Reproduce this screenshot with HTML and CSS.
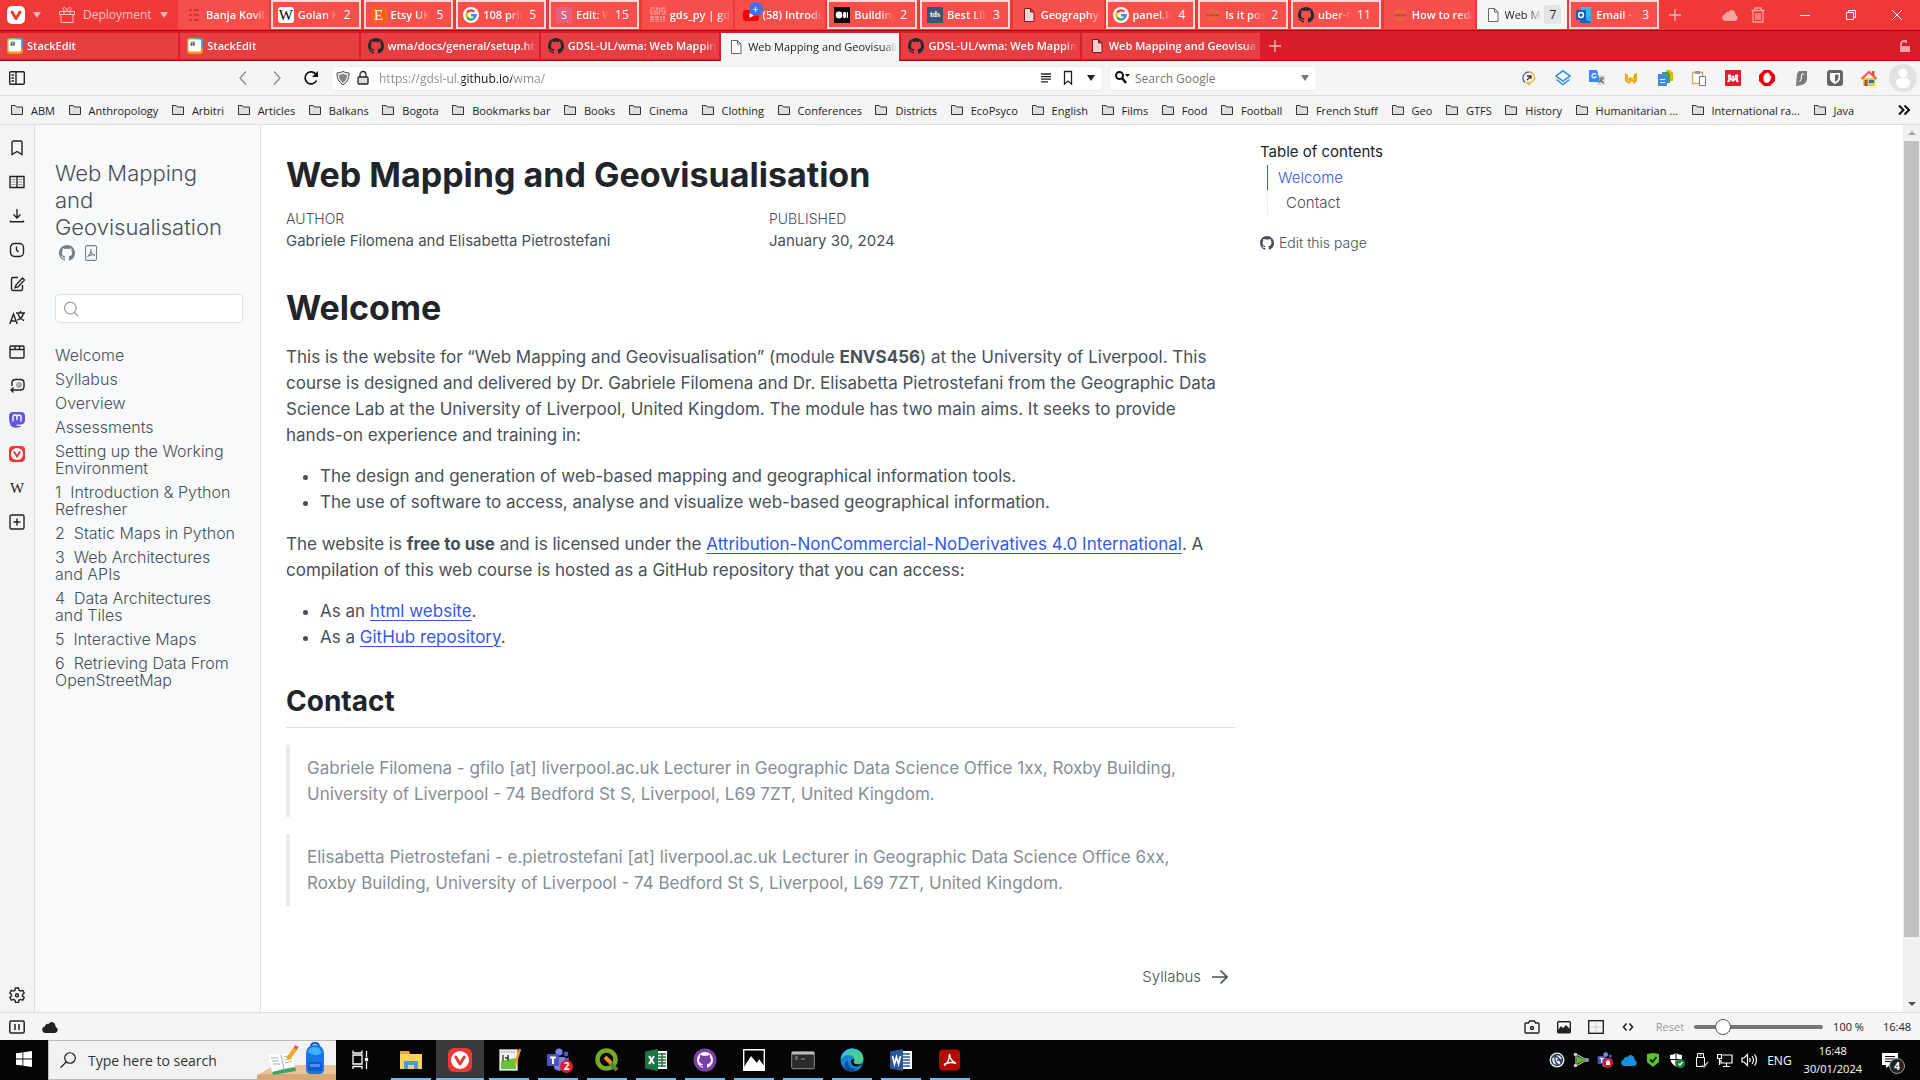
FILE: index.html
```html
<!DOCTYPE html>
<html lang="en">
<head>
    <meta charset="UTF-8">
    <meta name="viewport" content="width=device-width, initial-scale=1.0">
    <title>Web Mapping and Geovisualisation</title>
    <link rel="stylesheet" href="styles.css">
</head>
<body>

    <!-- shared icons -->
    <svg class="defs" aria-hidden="true">
        <symbol id="github" viewBox="0 0 16 16"><path fill="currentColor" d="M8 0C3.58 0 0 3.58 0 8c0 3.54 2.29 6.53 5.47 7.59.4.07.55-.17.55-.38 0-.19-.01-.82-.01-1.49-2.01.37-2.53-.49-2.69-.94-.09-.23-.48-.94-.82-1.13-.28-.15-.68-.52-.01-.53.63-.01 1.08.58 1.23.82.72 1.21 1.87.87 2.33.66.07-.52.28-.87.51-1.07-1.78-.2-3.64-.89-3.64-3.95 0-.87.31-1.59.82-2.15-.08-.2-.36-1.02.08-2.12 0 0 .67-.21 2.2.82.64-.18 1.32-.27 2-.27.68 0 1.36.09 2 .27 1.53-1.04 2.2-.82 2.2-.82.44 1.1.16 1.92.08 2.12.51.56.82 1.27.82 2.15 0 3.07-1.87 3.75-3.65 3.95.29.25.54.73.54 1.48 0 1.07-.01 1.93-.01 2.2 0 .21.15.46.55.38A8.01 8.01 0 0 0 16 8c0-4.42-3.58-8-8-8z"/></symbol>
        <symbol id="google" viewBox="0 0 16 16"><circle cx="8" cy="8" r="8" fill="#fff"/><g fill="none" stroke-width="2.4"><path stroke="#ea4335" d="M4.1 5.6A4.6 4.6 0 0 1 11.3 4.8"/><path stroke="#fbbc05" d="M4.1 10.4a4.8 4.8 0 0 1 0-4.8"/><path stroke="#34a853" d="M4.1 10.4a4.6 4.6 0 0 0 6.9 1"/><path stroke="#4285f4" d="M8 8.2h4.6a4.6 4.6 0 0 1-1.6 3.2"/></g></symbol>
        <symbol id="page" viewBox="0 0 16 16"><path fill="#fff" fill-opacity=".75" stroke="currentColor" d="M3.5 1.5h6l3.500 3.500v9.500h-9.500zM9.500 1.500v3.500h3.500"/></symbol>
        <symbol id="stackedit" viewBox="0 0 16 16"><rect width="16" height="16" rx="3" fill="#f7941d"/><path fill="#8bc540" d="M0 3v10l8-5V0H3a3 3 0 0 0-3 3z"/><path fill="#39a7e0" d="M8 0h5a3 3 0 0 1 3 3v8L8 8z"/><rect x="1.500" y="1.500" width="12.500" height="12" rx="1.500" fill="#fff"/><path stroke="#555" stroke-width=".9" d="M5 3.500 4.300 8M7.300 3.500 6.600 8M3.500 5h4.700M3.300 6.700H8"/></symbol>
        <symbol id="jupyter" viewBox="0 0 16 16"><path fill="none" stroke="#d9762b" stroke-width="2" d="M2.500 6Q8 1 13.500 6M2.500 10.500Q8 15 13.500 10.500"/><path stroke="#8a5040" stroke-width="1.500" stroke-dasharray="1.500 .7" d="M2 8.200h12"/></symbol>
        <symbol id="folder" viewBox="0 0 12 12"><path fill="#dedede" stroke="#333" d="M.5 10.500v-9h3.700l1.300 1.500h6v7.500z"/></symbol>
        <symbol id="vivaldi" viewBox="0 0 16 16"><rect width="16" height="16" rx="4" fill="#ef3939"/><circle cx="8" cy="8" r="6" fill="#fff"/><path fill="none" stroke="#ef3939" stroke-width="2" stroke-linecap="round" stroke-linejoin="round" d="M5.200 6 8 10.600 10.800 6"/></symbol>
        <symbol id="cloud" viewBox="0 0 16 16"><path fill="currentColor" d="M3.500 14a3.300 3.300 0 0 1-.8-6.500A3 3 0 0 1 6.500 5a3.700 3.700 0 0 1 6.900 1.500c.3 1 .3 1.300.7 1.700A3.100 3.100 0 0 1 12.800 14z"/></symbol>
        <symbol id="teams" viewBox="0 0 24 24"><circle cx="13" cy="4" r="3.600" fill="#7b83eb"/><circle cx="20" cy="6" r="2.400" fill="#5059c9"/><path fill="#5059c9" d="M17 10h6v6a4 4 0 0 1-6 3z"/><path fill="#7b83eb" d="M8 9h11v8a6 6 0 0 1-11 3z"/><rect x="1" y="6" width="12" height="12" rx="1" fill="#4b53bc"/><path stroke="#fff" stroke-width="2" d="M4 9.500h6M7 9.500V16"/></symbol>
        <symbol id="plus" viewBox="0 0 12 12"><path stroke="currentColor" stroke-width="1.400" d="M6 0v12M0 6h12"/></symbol>
    </svg>

    <header class="browser">
        <!-- top level tabs -->
        <div class="tabbar tabbar-main">
            <div class="workspace">
                <svg class="logo" viewBox="0 0 18 18"><rect width="18" height="18" rx="5" fill="#fff"/><path fill="none" stroke="#ef3939" stroke-width="3" stroke-linecap="round" stroke-linejoin="round" d="M5 6l4 6.500L13 6"/></svg>
                <i class="caret"></i>
                <svg class="gift" viewBox="0 0 16 16" fill="none" stroke="currentColor"><path d="M.5 4.500h15v3H.5zM2 7.500v8h12v-8M5 4.500v3M11 4.500v3M8 4.500C6 5 3.500 3.500 4 1.500S7.500.5 8 4.500C8.500.5 11.500-.5 12 1.500S10 5 8 4.500"/></svg>
                <span>Deployment</span>
                <i class="caret"></i>
            </div>
            <nav class="tabs">
                <button class="tab"><svg class="dim" viewBox="0 0 16 16"><path stroke="#b02a30" stroke-width="2" d="M3 3h3M8 3h5M3 8h3M8 8h5M3 13h3M8 13h5"/></svg><span>Banja Koviljača</span></button>
                <button class="tab stack"><i class="fav wiki">W</i><span>Golan Heights</span><b>2</b></button>
                <button class="tab stack"><i class="fav etsy">E</i><span>Etsy UK</span><b>5</b></button>
                <button class="tab stack"><svg><use href="#google"/></svg><span>108 prints</span><b>5</b></button>
                <button class="tab stack"><i class="fav sedit">S</i><span>Edit: Web</span><b>15</b></button>
                <button class="tab"><svg class="dim" viewBox="0 0 16 16"><g fill="none" stroke="#fff" stroke-width="1.200" stroke-dasharray="2 .6"><path d="M5 1H1v6h4V4H3M7 1v6h2l1-2V3L9 1zM15 1h-3v3h3v3h-3M1 9v6M3 9v6M6 9v6M8 9v6M11 9v6M14 9v6"/></g></svg><span>gds_py | gds</span></button>
                <button class="tab"><svg viewBox="0 0 16 16"><rect y="3" width="16" height="11" rx="3" fill="#f00000"/><path fill="#fff" d="M6.500 6v5L11 8.500z"/></svg><em>+</em><span>(58) Introduction</span></button>
                <button class="tab stack"><svg viewBox="0 0 16 16"><rect width="16" height="16" fill="#000"/><circle cx="5" cy="8" r="3.400" fill="#fff"/><ellipse cx="10.700" cy="8" rx="1.700" ry="3.200" fill="#fff"/><rect x="13" y="5" width="1" height="6" fill="#fff"/></svg><span>Building</span><b>2</b></button>
                <button class="tab stack"><i class="fav tds">tds</i><span>Best Lib</span><b>3</b></button>
                <button class="tab"><svg class="pink"><use href="#page"/></svg><span>Geography</span></button>
                <button class="tab stack"><svg><use href="#google"/></svg><span>panel.layout</span><b>4</b></button>
                <button class="tab stack"><svg><use href="#jupyter"/></svg><span>Is it possible</span><b>2</b></button>
                <button class="tab stack"><svg class="ink"><use href="#github"/></svg><span>uber-tools</span><b>11</b></button>
                <button class="tab"><svg><use href="#jupyter"/></svg><span>How to reduce</span></button>
                <button class="tab active"><svg class="grey"><use href="#page"/></svg><span>Web Mapping</span><b>7</b></button>
                <button class="tab stack"><svg viewBox="0 0 16 16"><path fill="#35b8f1" d="M5 0h10v14H5z"/><path fill="#1565c0" d="M4 9l12 7H4z"/><path fill="#28a8ea" d="M16 8v8L9 12z"/><rect y="3" width="10" height="10" rx="1" fill="#0a5fb8"/><circle cx="5" cy="8" r="2.400" fill="none" stroke="#fff" stroke-width="1.500"/></svg><span>Email - Pietro</span><b>3</b></button>
            </nav>
            <button class="newtab" aria-label="New tab"><svg><use href="#plus"/></svg></button>
            <div class="window-buttons">
                <svg class="soft" viewBox="0 0 16 16"><use href="#cloud"/></svg>
                <svg class="soft" viewBox="0 0 16 16" fill="none" stroke="currentColor" stroke-width="1.300"><path d="M1.500 3.500h13M5 3V1h6v2M3 4v11h10V4M6 6v7M8 6v7M10 6v7"/></svg>
                <button aria-label="Minimise"><svg viewBox="0 0 10 10"><path stroke="#fff" d="M0 5.500h10"/></svg></button>
                <button aria-label="Restore"><svg viewBox="0 0 10 10"><path fill="none" stroke="#fff" d="M.5 2.500h7v7h-7zM2.500 2.500v-2h7v7h-2"/></svg></button>
                <button aria-label="Close"><svg viewBox="0 0 10 10"><path stroke="#fff" d="M0 0l10 10M10 0L0 10"/></svg></button>
            </div>
        </div>

        <!-- tabs inside the open stack -->
        <div class="tabbar tabbar-sub">
            <nav class="tabs">
                <button class="tab"><svg><use href="#stackedit"/></svg><span>StackEdit</span></button>
                <button class="tab"><svg><use href="#stackedit"/></svg><span>StackEdit</span></button>
                <button class="tab"><svg class="ink"><use href="#github"/></svg><span>wma/docs/general/setup.html</span></button>
                <button class="tab"><svg class="ink"><use href="#github"/></svg><span>GDSL-UL/wma: Web Mapping</span></button>
                <button class="tab active"><svg class="grey"><use href="#page"/></svg><span>Web Mapping and Geovisualisation</span></button>
                <button class="tab"><svg class="ink"><use href="#github"/></svg><span>GDSL-UL/wma: Web Mapping</span></button>
                <button class="tab"><svg class="pink"><use href="#page"/></svg><span>Web Mapping and Geovisualisation</span></button>
            </nav>
            <button class="newtab" aria-label="New tab"><svg><use href="#plus"/></svg></button>
            <svg class="unlock" viewBox="0 0 12 12"><path fill="currentColor" d="M1 6h10v6H1z"/><path fill="none" stroke="currentColor" stroke-width="1.800" d="M2 6.500V3.500Q2.500 1 5.500 1H7v2"/></svg>
        </div>

        <div class="toolbar">
            <div class="toolbar-nav">
                <svg viewBox="0 0 16 16" fill="none" stroke="#222" stroke-width="1.400"><rect x=".7" y="1.700" width="14.600" height="12.600" rx="1"/><path d="M7 2v12M2.500 5H5M2.500 8H5M2.500 11H5"/></svg>
                <div class="arrows">
                    <svg viewBox="0 0 16 16" fill="none" stroke="#888" stroke-width="1.300"><path d="M11 1.500 5 8l6 6.500"/></svg>
                    <svg viewBox="0 0 16 16" fill="none" stroke="#888" stroke-width="1.300"><path d="M5 1.500 11 8l-6 6.500"/></svg>
                    <svg viewBox="0 0 16 16"><path fill="none" stroke="#111" stroke-width="1.700" d="M13.500 10.500a6 6 0 1 1-.5-6"/><path fill="#111" d="M15 1v6H9z"/></svg>
                </div>
            </div>
            <div class="field address">
                <svg viewBox="0 0 16 16"><path fill="#fff" stroke="#444" d="M8 1.500Q11 3 14 3q.5 8-6 11.800Q1.500 11 2 3q3 0 6-1.500z"/><path fill="#888" d="M8 3.500Q10.500 4.700 12.300 4.700q0 5-4.300 8.300-4.300-3.300-4.300-8.300 1.800 0 4.300-1.200z"/></svg>
                <svg viewBox="0 0 16 16"><path fill="none" stroke="#222" stroke-width="1.300" d="M5 7V4.500a3 3 0 0 1 6 0V7"/><rect x="3" y="7" width="10" height="7" rx="1" fill="#ddd" stroke="#222" stroke-width="1.300"/></svg>
                <input type="text" aria-label="Address" value="https://gdsl-ul.github.io/wma/">
                <svg viewBox="0 0 16 16"><path stroke="#222" stroke-width="1.300" d="M3 4h10M3 6.600h10M3 9.200h10M3 11.800h7"/></svg>
                <svg viewBox="0 0 16 16"><path fill="none" stroke="#222" stroke-width="1.300" d="M4.500 1.500h7v12.500L8 11l-3.500 3z"/></svg>
                <i class="caret dark"></i>
            </div>
            <div class="field search">
                <svg viewBox="0 0 16 16"><circle cx="5.500" cy="5.500" r="3.500" fill="none" stroke="#111" stroke-width="2"/><path stroke="#111" stroke-width="2.500" d="M8 8l4 5"/><path fill="#111" d="M11 4h5l-2.500 3z"/></svg>
                <input type="text" aria-label="Search" placeholder="Search Google">
                <i class="caret mid"></i>
            </div>
            <div class="extensions">
                <svg viewBox="0 0 16 16" fill="none" stroke-width="1.300"><path stroke="#3c64b1" d="M4 12.500A6 6 0 0 1 8 2"/><path stroke="#f5a623" d="M8 2a5.500 5.500 0 0 1 0 11H6l3 2"/><path stroke="#333" d="M6 10l4-4M6 6h4v3"/></svg>
                <svg viewBox="0 0 16 16" fill="none" stroke="#2a8ae0" stroke-width="1.500"><path d="M8 .8 15 6l-7 5-7-5zM1.500 9.500 8 14.500l6.500-5"/></svg>
                <svg viewBox="0 0 16 16"><path fill="#ddd" d="M6 5h10v10H8z"/><path fill="#4285f4" d="M0 0h8l3 12H0z"/><path fill="none" stroke="#fff" stroke-width="1.200" d="M7 4.500A2.200 2.200 0 1 0 7 7H5.300"/><path stroke="#667" d="M10 8h5M12.500 7v1M14 8q-1 3-4 5M11 9q1 3 4 4"/></svg>
                <svg viewBox="0 0 16 16"><path fill="#f2a91e" d="M2 3l3 2v4l2-2 3 1 1-4 3-1v8l-3 3-2-3-3 3-4-3z"/><path stroke="#fde3a8" d="M5 10l2 2M9 8l2 2"/></svg>
                <svg viewBox="0 0 16 16"><path fill="#f9ab00" d="M9 0h4l3 3v8H9z"/><path fill="#34a853" d="M5 2h6l2 2v9H5z"/><path fill="#4285f4" d="M1 4h6l3 3v9H1z"/><path stroke="#fff" d="M3 9.500h5M3 12.500h5"/></svg>
                <svg viewBox="0 0 16 16"><path fill="#fff" stroke="#dba75c" stroke-width="1.300" d="M1.500 2.500h10v11h-10z"/><path fill="#999" d="M4 1h5v3H4z"/><path fill="#fff" stroke="#777" d="M8.500 6.500h6v9h-6z"/></svg>
                <svg viewBox="0 0 16 16"><rect width="16" height="16" fill="#e01f2d"/><path fill="#fff" d="M2 11.500Q4 10 3 7.500h3L8 9l2-1.500h3Q12 10 14 11.500q-1.500 1-3 0L10.500 9.500 9 11.500H7L5.500 9.500 5 11.500q-1.500 1-3 0z"/><circle cx="4.500" cy="6" r="1.800" fill="#fff"/><circle cx="11.500" cy="6" r="1.800" fill="#fff"/><circle cx="8" cy="7" r="1.500" fill="#fff"/></svg>
                <svg viewBox="0 0 16 16"><path fill="#e8000d" d="M5 0h6l5 5v6l-5 5H5l-5-5V5z"/><path fill="#fff" d="M4.500 5.500h1V3.800h1.300V3h1.300v-.5h1.200v1h1.300v3l1-.8.9.7-1.500 4.300Q10 13 8 13q-3 0-3.500-3z"/></svg>
                <svg viewBox="0 0 16 16"><path fill="#7a7a7a" d="M6 1h8v8q0 6-11 7l1-12z"/><path fill="none" stroke="#fff" d="M11 4Q8 3 8.500 6T6.500 12"/></svg>
                <svg viewBox="0 0 16 16"><rect width="16" height="16" rx="3" fill="#666"/><path fill="#fff" d="M3 3h10v5q0 3.500-5 6-5-2.500-5-6z"/><path fill="#666" d="M8 4.500h3.500V8q0 2-3.500 4.200z"/></svg>
                <svg viewBox="0 0 16 16"><path fill="#f6c343" d="M2 8h12v8H2z"/><path fill="#c8553d" d="M11 1h2.500v5H11z"/><path fill="none" stroke="#ee5a4f" stroke-width="2.300" d="M.5 9 8 2l7.500 7"/><path fill="#2878b8" d="M8 10h5v3H8z"/><path fill="#9a5a2a" d="M3.500 10h3v6h-3z"/></svg>
                <svg class="avatar" viewBox="0 0 28 28"><circle cx="14" cy="14" r="14" fill="#e2e2e2"/><circle cx="14" cy="9" r="4.500" fill="#fff"/><rect x="7" y="14" width="14" height="10" rx="5" fill="#fff"/></svg>
            </div>
        </div>

        <nav class="bookmarks">
            <a href="#"><svg><use href="#folder"/></svg>ABM</a>
            <a href="#"><svg><use href="#folder"/></svg>Anthropology</a>
            <a href="#"><svg><use href="#folder"/></svg>Arbitri</a>
            <a href="#"><svg><use href="#folder"/></svg>Articles</a>
            <a href="#"><svg><use href="#folder"/></svg>Balkans</a>
            <a href="#"><svg><use href="#folder"/></svg>Bogota</a>
            <a href="#"><svg><use href="#folder"/></svg>Bookmarks bar</a>
            <a href="#"><svg><use href="#folder"/></svg>Books</a>
            <a href="#"><svg><use href="#folder"/></svg>Cinema</a>
            <a href="#"><svg><use href="#folder"/></svg>Clothing</a>
            <a href="#"><svg><use href="#folder"/></svg>Conferences</a>
            <a href="#"><svg><use href="#folder"/></svg>Districts</a>
            <a href="#"><svg><use href="#folder"/></svg>EcoPsyco</a>
            <a href="#"><svg><use href="#folder"/></svg>English</a>
            <a href="#"><svg><use href="#folder"/></svg>Films</a>
            <a href="#"><svg><use href="#folder"/></svg>Food</a>
            <a href="#"><svg><use href="#folder"/></svg>Football</a>
            <a href="#"><svg><use href="#folder"/></svg>French Stuff</a>
            <a href="#"><svg><use href="#folder"/></svg>Geo</a>
            <a href="#"><svg><use href="#folder"/></svg>GTFS</a>
            <a href="#"><svg><use href="#folder"/></svg>History</a>
            <a href="#"><svg><use href="#folder"/></svg>Humanitarian ...</a>
            <a href="#"><svg><use href="#folder"/></svg>International ra...</a>
            <a href="#"><svg><use href="#folder"/></svg>Java</a>
            <button class="more" aria-label="More bookmarks"><svg viewBox="0 0 12 12"><path fill="none" stroke="#111" stroke-width="2" d="M1 1.500 5.500 6 1 10.500M6.500 1.500 11 6l-4.500 4.500"/></svg></button>
        </nav>
    </header>

    <div class="viewport">
        <aside class="panel">
            <svg viewBox="0 0 16 16"><path d="M3 14.500v-12q0-1.500 1.500-1.500h7Q13 1 13 2.500v12L8 11.500z"/></svg>
            <svg viewBox="0 0 16 16"><path d="M1 2.500h14v11H1zM8 2.500V14"/><path class="thin" d="M2.500 5.500h4M2.500 8h4M2.500 10.500h4M9.500 5.500h4M9.500 8h4M9.500 10.500h4"/></svg>
            <svg viewBox="0 0 16 16"><path d="M8 1v8.500M4.500 6.500 8 10l3.500-3.500M1.500 12.500v1.300h13v-1.300"/></svg>
            <svg viewBox="0 0 16 16"><rect x="1.500" y="1.500" width="13" height="13" rx="4"/><path d="M7.500 4.500V8l2 2"/></svg>
            <svg viewBox="0 0 16 16"><path d="M9 1.500H4q-1.500 0-1.500 1.500v10q0 1.500 1.500 1.500h8q1.500 0 1.500-1.500V9M13.500 2l2 2L9 11l-3 .8L7 9z"/></svg>
            <svg viewBox="0 0 16 16"><path d="M.8 14 4.500 4l3.700 10M2 11h5M7 3h9M11.500 1v2M14.500 3q-1 5-6 7M9 4q2 5 6 6.500"/></svg>
            <svg viewBox="0 0 16 16"><rect x="1" y="2" width="14" height="12" rx="1"/><path d="M1 5.500h14M6 2v3.500M10.500 2v3.500"/></svg>
            <svg viewBox="0 0 16 16"><path d="M3 8V5q0-3.500 3.500-3.500h5Q15 1.500 15 5v3.500q0 3.500-3.500 3.500H2M4.500 9.500 2 12l2.500 2.500"/><circle cx="10" cy="7" r="3" fill="#aaa" stroke="none"/></svg>
            <svg viewBox="0 0 16 16"><path fill="#6156e0" stroke="none" d="M4 0h8q4 0 4 4v4q0 4-4 4.500l-5 .2q1 1.800 4.500 1v1.300Q3 17.500 1 12 0 9 0 4q0-4 4-4z"/><path stroke="#fff" d="M4 9.500V5q0-2 2-2t2 2v3-3q0-2 2-2t2 2v4.500"/></svg>
            <svg class="filled"><use href="#vivaldi"/></svg>
            <span class="panel-w">W</span>
            <svg viewBox="0 0 16 16"><rect x="1" y="1" width="14" height="14" rx="1.500"/><path d="M8 4.500v7M4.500 8h7"/></svg>
            <svg class="settings" viewBox="0 0 16 16"><path d="M6.500 1h3l.5 2.200 1.500.9 2.200-.7 1.500 2.600L13.500 7.500v1.500l1.700 1.500-1.500 2.600-2.200-.7-1.500.9L9.500 15.500h-3L6 13.300l-1.500-.9-2.200.7L.8 10.500 2.500 9V7.500L.8 6l1.500-2.600 2.200.7L6 3.200z"/><circle cx="8" cy="8.200" r="1.500"/></svg>
        </aside>

        <div class="page">
            <nav class="book-nav">
                <div class="book-title">Web Mapping and Geovisualisation</div>
                <div class="book-tools">
                    <a href="#" aria-label="Source code"><svg><use href="#github"/></svg></a>
                    <a href="#" aria-label="Download PDF"><svg viewBox="0 0 16 16" fill="none" stroke="currentColor" stroke-width="1.100"><rect x="2.500" y=".6" width="11" height="14.800" rx="1.500"/><path d="M4.500 12Q8 9 8 4M7.700 4.500Q8 9 12 10.500M4.500 11.500Q8 9 12 9.800"/></svg></a>
                </div>
                <label class="book-search">
                    <svg viewBox="0 0 16 16" fill="none" stroke="#a0a0a0" stroke-width="1.300"><circle cx="7.300" cy="7" r="5.800"/><path d="M11.300 11.300 15 15"/></svg>
                    <input type="text" aria-label="Search this book">
                </label>
                <ul>
                    <li><a href="#">Welcome</a></li>
                    <li><a href="#">Syllabus</a></li>
                    <li><a href="#">Overview</a></li>
                    <li><a href="#">Assessments</a></li>
                    <li><a href="#">Setting up the Working Environment</a></li>
                    <li><a href="#">1&nbsp; Introduction &amp; Python Refresher</a></li>
                    <li><a href="#">2&nbsp; Static Maps in Python</a></li>
                    <li><a href="#">3&nbsp; Web Architectures and APIs</a></li>
                    <li><a href="#">4&nbsp; Data Architectures and Tiles</a></li>
                    <li><a href="#">5&nbsp; Interactive Maps</a></li>
                    <li><a href="#">6&nbsp; Retrieving Data From OpenStreetMap</a></li>
                </ul>
            </nav>

            <main>
                <h1>Web Mapping and Geovisualisation</h1>
                <div class="meta">
                    <div>
                        <div class="meta-heading">AUTHOR</div>
                        <div>Gabriele Filomena and Elisabetta Pietrostefani</div>
                    </div>
                    <div>
                        <div class="meta-heading">PUBLISHED</div>
                        <div>January 30, 2024</div>
                    </div>
                </div>

                <h1>Welcome</h1>
                <p>This is the website for “Web Mapping and Geovisualisation” (module <strong>ENVS456</strong>) at the University of Liverpool. This course is designed and delivered by Dr. Gabriele Filomena and Dr. Elisabetta Pietrostefani from the Geographic Data Science Lab at the University of Liverpool, United Kingdom. The module has two main aims. It seeks to provide hands-on experience and training in:</p>
                <ul>
                    <li>The design and generation of web-based mapping and geographical information tools.</li>
                    <li>The use of software to access, analyse and visualize web-based geographical information.</li>
                </ul>
                <p>The website is <strong>free to use</strong> and is licensed under the <a href="#">Attribution-NonCommercial-NoDerivatives 4.0 International</a>. A compilation of this web course is hosted as a GitHub repository that you can access:</p>
                <ul>
                    <li>As an <a href="#">html website</a>.</li>
                    <li>As a <a href="#">GitHub repository</a>.</li>
                </ul>

                <h2>Contact</h2>
                <blockquote>Gabriele Filomena - gfilo [at] liverpool.ac.uk Lecturer in Geographic Data Science Office 1xx, Roxby Building, University of Liverpool - 74 Bedford St S, Liverpool, L69 7ZT, United Kingdom.</blockquote>
                <blockquote>Elisabetta Pietrostefani - e.pietrostefani [at] liverpool.ac.uk Lecturer in Geographic Data Science Office 6xx, Roxby Building, University of Liverpool - 74 Bedford St S, Liverpool, L69 7ZT, United Kingdom.</blockquote>

                <a class="next" href="#">Syllabus <svg viewBox="0 0 16 16" fill="none" stroke="currentColor" stroke-width="1.700"><path d="M0 8h15M8.500 1.500 15 8l-6.500 6.500"/></svg></a>
            </main>

            <aside class="toc">
                <h2>Table of contents</h2>
                <ul>
                    <li class="current"><a href="#">Welcome</a></li>
                    <li class="sub"><a href="#">Contact</a></li>
                </ul>
                <a class="edit" href="#"><svg><use href="#github"/></svg>Edit this page</a>
            </aside>
        </div>

        <div class="scrollbar"><i class="up"></i><div class="thumb"></div><i class="down"></i></div>
    </div>

    <div class="statusbar">
        <svg viewBox="0 0 16 16" fill="none" stroke="#222" stroke-width="1.500"><rect x=".8" y="2" width="14.400" height="12" rx="1.500"/><path d="M6 5v6M10 5v6"/></svg>
        <svg class="black"><use href="#cloud"/></svg>
        <div class="status-right">
            <svg viewBox="0 0 16 16" fill="none" stroke="#222" stroke-width="1.400"><path d="M1 13V5q0-1 1-1h2.500L5.500 2h5l1 2H14q1 0 1 1v8q0 1-1 1H2q-1 0-1-1z"/><circle cx="8" cy="9" r="1.500"/></svg>
            <svg viewBox="0 0 16 16"><rect x="1.700" y="2.700" width="12.600" height="11" rx="1" fill="#fff" stroke="#222" stroke-width="1.400"/><path fill="#222" d="M2 11l3-4 2 2 3-3 4 4v4H2z"/></svg>
            <svg viewBox="0 0 16 16" fill="none" stroke="#222" stroke-width="1.400"><rect x=".7" y="1.700" width="14.600" height="12.600"/><path stroke="#ccc" stroke-width="1" d="M8 2.500v11M1.500 8h13"/></svg>
            <svg viewBox="0 0 16 16" fill="none" stroke="#222" stroke-width="1.600"><path d="M6.500 4.500 3.500 8l3 3.500M9.500 4.500l3 3.500-3 3.500"/></svg>
            <button class="reset">Reset</button>
            <input type="range" aria-label="Zoom" min="20" max="500" value="108">
            <span>100 %</span>
            <span class="time">16:48</span>
        </div>
    </div>

    <footer class="taskbar">
        <button class="start" aria-label="Start"><svg viewBox="0 0 16 16"><path fill="#fff" d="M0 2.300 6.500 1.400v6.100H0zM7.300 1.300 16 0v7.500H7.300zM0 8.400h6.500v6.200L0 13.700zM7.300 8.400H16V16l-8.700-1.200z"/></svg></button>
        <label class="task-search">
            <svg class="lens" viewBox="0 0 16 16" fill="none" stroke="#111" stroke-width="1.100"><circle cx="10" cy="6" r="5.300"/><path d="M6.300 10 .5 15.700"/></svg>
            <input type="text" placeholder="Type here to search">
            <svg class="desk" viewBox="0 0 79 40">
                <path fill="#d9a877" d="M0 36 18 25h61v15H0z"/><path fill="#e9c295" d="M0 36 18 25h61v9H0z"/>
                <path fill="#3fa36a" d="m12 16 24 2 3 13-23 4z"/><path fill="#fff" d="m11 14 13 1 12-3 2 15-11 2-12 3z"/><path stroke="#9bb5a8" fill="none" d="m24 15 3 14M14 18l7 0M15 21l7 0M16 24l7 0M27 17l7-2M28 20l7-2M28 23l7-2"/>
                <path stroke="#f5a623" stroke-width="4" d="m31 19 7-10"/><path stroke="#ef5350" stroke-width="4" d="m38 9 2-3"/>
                <path fill="none" stroke="#1457b8" stroke-width="2" d="M54 7q0-4 4-4t4 4"/><path fill="#1976e8" d="M49 14q0-9 9-9t9 9v15q0 5-5 5h-8q-5 0-5-5z"/><path fill="#3fb1ff" d="M51 12q1-5 7-5 5 0 7 6-7 5-14-1z"/><path fill="#125ac4" d="M51 22h14v9H51z"/><path fill="#4c8dff" d="M53 24h10v3H53z"/>
            </svg>
        </label>
        <div class="apps">
            <button class="app" aria-label="Task view"><svg viewBox="0 0 24 24" fill="none" stroke="#fff" stroke-width="1.300"><path d="M5 7h9v9H5zM5 2.500V5h9V2.500M5 21v-2.500h9V21M18.500 3v6M18.500 14v7"/><path fill="#fff" d="M17.500 10.500h2v2h-2z"/></svg></button>
            <button class="app open" aria-label="File Explorer"><svg viewBox="0 0 24 24"><path fill="#e8a820" d="M1 3h9l1 2v5H1z"/><path fill="#ffd35c" d="M1 6h22v15H1z"/><path fill="#3f9de6" d="M5 13h14v8h-4v-4H9v4H5z"/></svg></button>
            <button class="app open current" aria-label="Vivaldi"><svg><use href="#vivaldi"/></svg></button>
            <button class="app open" aria-label="Notepad++"><svg viewBox="0 0 24 24"><path fill="#eef2ea" stroke="#999" d="M2.500 1.500h18v21h-18z"/><path fill="#64c436" d="M4 13l15-3v11H4z"/><path stroke="#888" stroke-dasharray="1.500 1" d="M4 4h15"/><path stroke="#333" stroke-width="1.300" d="M6 7v6M8 10h4M11 7v6"/><path stroke="#f39a1e" stroke-width="2.500" d="m23 1-5 16"/></svg></button>
            <button class="app open" aria-label="Teams"><svg><use href="#teams"/></svg><em>2</em></button>
            <button class="app open" aria-label="QGIS"><svg viewBox="0 0 24 24"><circle cx="11.500" cy="11.500" r="9" fill="none" stroke="#77a928" stroke-width="4.500"/><path stroke="#4d8a24" stroke-width="4" d="m15 15 7 7"/><path stroke="#f08a24" stroke-width="4" d="m10 9 6 6"/></svg></button>
            <button class="app open" aria-label="Excel"><svg viewBox="0 0 24 24"><path fill="#fff" d="M12 3h11v18H12z"/><path stroke="#1f7244" stroke-width="1.500" d="M14 6h8M14 9h8M14 12h8M14 15h8M14 18h8M18 5v14"/><path fill="#1f7244" d="M1 3.500 14 1v22L1 20.500z"/><path stroke="#fff" stroke-width="2" d="m5 8 5 8M10 8l-5 8"/></svg></button>
            <button class="app open" aria-label="GitHub Desktop"><svg viewBox="0 0 24 24"><circle cx="12" cy="12" r="11.500" fill="#7b3fa8"/><circle cx="12" cy="12" r="8" fill="#fff"/><path fill="#7b3fa8" d="M7 6.500l2.500 1.300h5L17 6.500v3q1.500 2 .5 4.500-1 2-3.500 2.300v4h-4v-2q-2 .5-3-1.500 1.500 1 3-.2v-.3Q7.500 16 6.500 14 5.500 11.500 7 9.500z"/></svg></button>
            <button class="app open" aria-label="Photos"><svg viewBox="0 0 24 24"><path fill="#000" stroke="#fff" stroke-width="1.400" d="M1.700 1.700h20.600v20.600H1.700z"/><path fill="#fff" d="M2 19 9 8l6 7 2-4 5 7v5H2z"/></svg></button>
            <button class="app open" aria-label="Command prompt"><svg viewBox="0 0 24 24"><rect x=".7" y="3.700" width="22.600" height="17" rx="1" fill="#2b2b2b" stroke="#8e8e8e"/><path fill="#bbb" d="M1 4h22v2.500H1z"/><path stroke="#999" d="M4 9h3M4 11h3M10 11h4"/></svg></button>
            <button class="app open" aria-label="Edge"><svg viewBox="0 0 24 24"><circle cx="12" cy="12" r="11.500" fill="#1583d6"/><path fill="#4fd08a" d="M2 7Q7 0 14 .8 23 2 23.500 11q-.5 5-7 5-4-1-2-4Q14 7 8 7 4 7 1 11z"/><path fill="#37c2e8" d="M2 7Q7-1 15 1q5 2 6 5-4-3-11-2Q5 5 1 11z"/><path fill="#050505" d="M11 14q0-3 3-3 1 1-.5 2.500 0 3 4.500 3 3 0 5-1.500-2 3-6 3.500-5 0-6-4.500z"/><path fill="#0f4c9c" d="M8 12q-1 9 9 9-5 4-11 1-4-5 2-10z"/></svg></button>
            <button class="app open" aria-label="Word"><svg viewBox="0 0 24 24"><path fill="#fff" d="M12 3h11v18H12z"/><path stroke="#2b579a" stroke-width="1.500" d="M14 6h7M14 9h7M14 12h7M14 15h7M14 18h7"/><path fill="#2b579a" d="M1 3.500 14 1v22L1 20.500z"/><path fill="none" stroke="#fff" stroke-width="1.700" d="m3.500 8 2 8L7.500 9l2 7 2-8"/></svg></button>
            <button class="app open" aria-label="Acrobat"><svg viewBox="0 0 24 24"><rect x="1" y="1.500" width="21" height="21" rx="4" fill="#b30b00"/><path fill="none" stroke="#fff" stroke-width="1.500" d="M6 17.500Q11.500 14 11.500 6q0 6 6.500 9.500Q12 13 6 16.500"/></svg></button>
        </div>
        <div class="tray">
            <svg viewBox="0 0 16 16"><circle cx="8" cy="8" r="7.500" fill="#e8eef6"/><g fill="none" stroke="#234" stroke-width="1.300"><circle cx="8" cy="8" r="5.500"/><path d="M4 5q6-2 8 6M7 3q-3 5 2 10M8 8h5"/></g></svg>
            <svg viewBox="0 0 16 16"><path fill="none" stroke="#ddd" d="M3 2v12l11-6z"/><path fill="#5cb531" d="m4 4 9 4-9 4z"/><circle cx="2.500" cy="2.500" r="1.700" fill="#ccc"/><circle cx="2.500" cy="13.500" r="1.700" fill="#ccc"/><circle cx="14" cy="8" r="2" fill="#99b"/></svg>
            <svg viewBox="0 0 16 16"><svg width="15" height="15"><use href="#teams"/></svg><circle cx="11" cy="11" r="5" fill="#d3202e"/><path fill="#fff" d="M9 13V9.500q2-3 4 0V13z"/></svg>
            <svg class="azure"><use href="#cloud"/></svg>
            <svg viewBox="0 0 16 16"><path fill="#5cc62f" d="M2 2l6-1 6 1v8l-6 5-6-5z"/><path fill="none" stroke="#111" stroke-width="1.800" d="m5 7.500 2.500 2.500 4-5"/></svg>
            <svg viewBox="0 0 16 16"><path fill="#fff" d="M1 3q4 0 6-2 3 2 6 2 1 7-6 12Q0 10 1 3z"/><path stroke="#000" d="M7 1v14M1 7.500h12"/><circle cx="11.500" cy="11.500" r="4.500" fill="#15843f"/><path fill="none" stroke="#fff" stroke-width="1.300" d="m9.500 11.500 1.500 1.500 2.500-3"/></svg>
            <svg viewBox="0 0 16 16" fill="none" stroke="#fff"><path d="M4.500 5.500V1.500h6v4M3.500 14.500v-9h8v9zM6.500 3h2"/><path stroke="#aaa" stroke-width="1.500" d="m9 13 2 2 4-5"/></svg>
            <svg viewBox="0 0 16 16" fill="none" stroke="#fff" stroke-width="1.200"><path d="M5.500 3H15v8H4V8M9.500 11v3M6 14.500h7M.5 2.500h4v4h-4zM2.500 6.500V13"/></svg>
            <svg viewBox="0 0 16 16" fill="none" stroke="#fff" stroke-width="1.200"><path d="M1 6h2l3.500-3.500v11L3 10H1zM8.500 6q1.300 2 0 4M11 4q3 4 0 8M13.500 2.500q4 5.500 0 11"/></svg>
            <span class="lang">ENG</span>
            <div class="clock"><span>16:48</span><span>30/01/2024</span></div>
            <button class="notify" aria-label="Notifications"><svg viewBox="0 0 16 16"><path fill="#fff" d="M0 1h16v12h-8l-4 3v-3H0z"/><path stroke="#000" d="M3 4.500h10M3 7h10M3 9.500h7"/></svg><em>4</em></button>
        </div>
    </footer>

</body>
</html>
```

FILE: styles.css
```css
* {
    box-sizing: border-box;
}
body {
    display: flex;
    flex-direction: column;
    height: 100vh;
    margin: 0;
    font-family: "Open Sans", sans-serif;
    font-size: 11px;
    color: #222;
    overflow: hidden;
}
button {
    padding: 0;
    border: none;
    background: none;
    font: inherit;
    color: inherit;
}
input {
    min-width: 0;
    padding: 0;
    border: none;
    outline: none;
    background: none;
    font: inherit;
}
a {
    color: inherit;
    text-decoration: none;
}
ul {
    margin: 0;
    padding: 0;
}
svg {
    flex: none;
    width: 16px;
    height: 16px;
}
.defs {
    position: absolute;
    width: 0;
    height: 0;
}
.caret {
    flex: none;
    border: 4px solid transparent;
    border-top: 6px solid #ffb3b0;
    border-bottom: 0;
}
.caret.dark {
    border-top-color: #222;
}
.caret.mid {
    border-top-color: #777;
}

/* tabs */
.tabbar {
    display: flex;
    align-items: center;
    border-bottom: 1px solid #b8000f;
    color: #fff;
}
.tabbar-main {
    height: 31px;
    padding-bottom: 1px;
    background: #ef3939;
}
.workspace {
    display: flex;
    align-items: center;
    flex: none;
    width: 178px;
    padding-left: 7px;
    color: #ffc2c0;
    font-size: 12px;
}
.workspace .logo {
    width: 18px;
    height: 18px;
    margin-right: 8px;
}
.workspace .gift {
    margin: 0 8px 0 18px;
}
.workspace span {
    margin-right: 8px;
}
.tabs {
    display: grid;
    grid-auto-flow: column;
    grid-auto-columns: minmax(0, 1fr);
    gap: 2px;
    height: 100%;
}
.tabbar-main .tabs {
    flex: 0 1 1482px;
}
.tab {
    display: flex;
    align-items: center;
    position: relative;
    min-width: 0;
    padding: 0 2px 0 8px;
    background: #f7504c;
    text-align: left;
}
.tab span {
    flex: 1;
    min-width: 0;
    margin-left: 4px;
    overflow: hidden;
    white-space: nowrap;
    font-weight: 600;
    -webkit-mask-image: linear-gradient(to right, #000 calc(100% - 14px), transparent);
    mask-image: linear-gradient(to right, #000 calc(100% - 14px), transparent);
}
.tab b {
    margin: 0 5px 0 6px;
    font-weight: 400;
    font-size: 12px;
}
.tab em {
    position: absolute;
    left: 14px;
    top: 2px;
    width: 14px;
    height: 14px;
    border-radius: 50%;
    background: #4470e8;
    font-style: normal;
    line-height: 13px;
    text-align: center;
}
.tab.stack {
    padding: 0 3px 0 5px;
    border: 2px solid #ffd9d8;
    margin-right: 1px;
}
.tab.active {
    background: #f5f5f5;
    color: #222;
}
.tab.active span {
    font-weight: 400;
}
.tab.active b {
    padding: 1px 5px;
    margin: 0 4px 0 2px;
    background: #e4e4e4;
    border-radius: 2px;
}
.fav {
    flex: none;
    width: 16px;
    height: 16px;
    font: 15px/16px "Liberation Serif", serif;
    text-align: center;
}
.wiki {
    background: #fff;
    color: #000;
    border-radius: 3px;
}
.etsy {
    background: #f1641e;
}
.sedit {
    background: #e4607c;
    font: 11px/16px "Open Sans", sans-serif;
}
.tds {
    background: #355876;
    font: bold 8px/16px "Liberation Serif", serif;
}
.ink {
    color: #24292e;
}
.grey {
    color: #666;
}
.pink {
    color: #7a1a20;
}
.dim {
    opacity: .6;
}
.newtab {
    display: flex;
    margin-left: 9px;
    color: #ffb3b0;
}
.newtab svg {
    width: 12px;
    height: 12px;
}
.window-buttons {
    display: flex;
    align-items: center;
    margin-left: auto;
    padding-right: 18px;
}
.window-buttons .soft {
    color: #ffa3a0;
    margin-right: 12px;
}
.window-buttons button {
    display: flex;
    margin-left: 36px;
}
.window-buttons button:nth-of-type(1) {
    margin-left: 22px;
}
.window-buttons button svg {
    width: 10px;
    height: 10px;
}
.tabbar-sub {
    height: 30px;
    background: #d81c2a;
}
.tabbar-sub .tabs {
    flex: 0 1 1260px;
    margin-bottom: -1px;
}
.tabbar-sub .tab {
    padding: 0 2px 0 7px;
    margin: 1px 0 2px;
    background: #e63e42;
}
.tabbar-sub .tab.active {
    margin: 1px 0 0;
    background: #f5f5f5;
}
.unlock {
    width: 12px;
    height: 12px;
    margin-left: auto;
    margin-right: 9px;
    color: #ffa3a0;
}

/* address bar */
.toolbar {
    display: flex;
    align-items: center;
    height: 35px;
    background: #f5f5f5;
    border-bottom: 1px solid #dcdcdc;
}
.toolbar-nav {
    display: flex;
    justify-content: space-between;
    flex: none;
    width: 331px;
    padding: 0 12px 0 9px;
}
.arrows {
    display: flex;
    gap: 18px;
}
.field {
    display: flex;
    align-items: center;
    height: 25px;
    background: #fff;
    border: 1px solid #ececec;
    border-radius: 4px;
    font-size: 12px;
}
.field input {
    flex: 1;
}
.address {
    flex: 0 1 772px;
    gap: 4px;
    padding: 0 7px 0 3px;
}
.address input {
    margin-left: 4px;
    color: transparent;
    background: linear-gradient(to right, #8a8a8a 83px, #111 83px, #111 133px, #8a8a8a 133px);
    -webkit-background-clip: text;
    background-clip: text;
}
.address svg:nth-of-type(4) {
    margin: 0 7px 0 2px;
}
.search {
    flex: 0 1 208px;
    gap: 5px;
    margin-left: 6px;
    padding: 0 7px 0 4px;
}
.search input::placeholder {
    color: #777;
}
.extensions {
    display: flex;
    align-items: center;
    gap: 18px;
    margin-left: auto;
    padding-right: 3px;
}
.extensions .avatar {
    width: 28px;
    height: 28px;
    margin-left: -6px;
}
.bookmarks {
    display: flex;
    align-items: center;
    justify-content: space-between;
    height: 29px;
    padding: 0 10px 0 11px;
    background: #f5f5f5;
    border-bottom: 1px solid #dcdcdc;
    white-space: nowrap;
}
.bookmarks a {
    display: flex;
    align-items: center;
    gap: 8px;
}
.bookmarks svg {
    width: 12px;
    height: 12px;
}
.more {
    display: flex;
    margin-left: 30px;
}

/* web panels and page */
.viewport {
    display: flex;
    flex: 1;
    min-height: 0;
}
.panel {
    display: flex;
    flex-direction: column;
    align-items: center;
    gap: 18px;
    flex: none;
    width: 35px;
    padding: 15px 0 9px;
    background: #f4f4f4;
    border-right: 1px solid #dcdcdc;
}
.panel svg {
    fill: none;
    stroke: #222;
    stroke-width: 1.4;
}
.panel .thin {
    stroke: #999;
    stroke-width: 1;
}
.panel .filled {
    stroke: none;
}
.panel-w {
    font: 15px/16px "Liberation Serif", serif;
}
.panel .settings {
    margin-top: auto;
}
.page {
    display: grid;
    grid-template-columns: 226px minmax(0, 949px) minmax(0, 1fr);
    column-gap: 25px;
    flex: 1;
    min-width: 0;
    background: #fff;
    font: 17px/26px Inter, sans-serif;
    color: #495057;
}
.book-nav {
    padding: 35px 17px 0 20px;
    background: #f8f9fa;
    border-right: 1px solid #dee2e6;
    font-size: 16px;
    font-weight: 300;
    line-height: 17px;
}
.book-title {
    padding-right: 6px;
    font-size: 22px;
    line-height: 27px;
}
.book-tools {
    display: flex;
    gap: 8px;
    margin: 4px 0 0 4px;
    color: #7a7f84;
}
.book-tools a {
    display: flex;
}
.book-search {
    display: flex;
    align-items: center;
    height: 29px;
    margin: 33px 0 24px;
    padding: 0 7px;
    background: #fff;
    border: 1px solid #dee2e6;
    border-radius: 4px;
}
.book-nav ul {
    padding-right: 6px;
}
.book-nav li {
    list-style: none;
    margin-bottom: 7px;
}
main {
    padding-top: 29px;
}
h1, h2 {
    margin: 0;
    color: #212529;
    font-weight: 700;
}
h1 {
    font-size: 34px;
    line-height: 41px;
}
.meta {
    display: grid;
    grid-template-columns: 1fr 1fr;
    column-gap: 17px;
    margin: 13px 0 35px;
    font-size: 15px;
    line-height: 23px;
}
.meta-heading {
    font-size: 14px;
    font-weight: 300;
    line-height: 21px;
}
main p {
    margin: 16px 0 15px;
}
main strong {
    font-weight: 700;
}
main ul {
    padding-left: 34px;
}
main p a, main li a {
    color: #3459e6;
    text-decoration: underline;
    text-underline-offset: 3px;
    text-decoration-thickness: 1px;
}
main h2 {
    margin: 35px 0 17px;
    padding-bottom: 9px;
    border-bottom: 1px solid #dee2e6;
    font-size: 28px;
    line-height: 33px;
}
blockquote {
    margin: 0 0 17px;
    padding: 10px 17px;
    border-left: 4px solid #e9ecef;
    color: #868e96;
}
.next {
    display: flex;
    justify-content: flex-end;
    align-items: center;
    gap: 11px;
    margin-top: 59px;
    padding-right: 7px;
    font-size: 15px;
    font-weight: 300;
    line-height: 23px;
}
.toc {
    padding-top: 15px;
    font-size: 15px;
    font-weight: 300;
    line-height: 25px;
}
.toc h2 {
    margin-bottom: 2px;
    font-size: 15px;
    line-height: 23px;
    font-weight: 400;
}
.toc li {
    list-style: none;
    margin-left: 7px;
    padding-left: 10px;
    border-left: 1px solid #e9ecef;
}
.toc .current {
    border-color: #3459e6;
    color: #3459e6;
}
.toc .sub {
    padding-left: 18px;
}
.edit {
    display: flex;
    align-items: center;
    gap: 5px;
    margin-top: 17px;
    font-size: 14px;
    line-height: 21px;
}
.edit svg {
    width: 14px;
    height: 14px;
}
.scrollbar {
    display: flex;
    flex-direction: column;
    align-items: center;
    flex: none;
    width: 17px;
    padding: 6px 0;
    background: #f1f1f1;
}
.scrollbar i {
    border: 4px solid transparent;
}
.scrollbar .up {
    border-bottom-color: #a3a3a3;
    border-top: 0;
}
.scrollbar .down {
    border-top-color: #505050;
    border-bottom: 0;
    margin-top: auto;
}
.thumb {
    width: 15px;
    height: 91%;
    margin-top: 6px;
    background: #c1c1c1;
}

/* bottom bars */
.statusbar {
    display: flex;
    align-items: center;
    gap: 17px;
    height: 28px;
    padding: 0 9px;
    background: #f5f5f5;
    border-top: 1px solid #dcdcdc;
}
.black {
    color: #222;
}
.status-right {
    display: flex;
    align-items: center;
    gap: 16px;
    margin-left: auto;
}
.reset {
    margin-left: 4px;
    color: #999;
}
.status-right input {
    appearance: none;
    width: 129px;
    height: 4px;
    margin: 0 -6px;
    background: #777;
    border-radius: 2px;
}
.status-right input::-webkit-slider-thumb {
    appearance: none;
    width: 16px;
    height: 16px;
    background: #fff;
    border: 1px solid #555;
    border-radius: 50%;
}
.time {
    margin-left: 3px;
}
.taskbar {
    display: flex;
    height: 40px;
    background: #050505;
    color: #fff;
}
.start {
    width: 48px;
    flex: none;
}
.task-search {
    display: flex;
    align-items: center;
    flex: none;
    width: 288px;
    padding-left: 11px;
    background: #f2f2f2;
    border: 1px solid #bbb;
    border-right: 0;
}
.task-search input {
    flex: 1;
    margin-left: 12px;
    font-size: 14px;
}
.task-search input::placeholder {
    color: #333;
}
.task-search .desk {
    width: 79px;
    height: 40px;
}
.apps {
    display: flex;
    gap: 1px;
}
.app {
    display: flex;
    align-items: center;
    justify-content: center;
    position: relative;
    width: 48px;
}
.app:first-child {
    margin-right: 2px;
}
.app svg {
    width: 24px;
    height: 24px;
}
.app.open::after {
    content: "";
    position: absolute;
    bottom: 0;
    left: 4px;
    right: 4px;
    height: 2px;
    background: #76b9ed;
}
.app.current {
    background: #3a3a3a;
}
.app.current::after {
    left: 0;
    right: 0;
}
.app em {
    position: absolute;
    right: 9px;
    bottom: 7px;
    width: 13px;
    height: 13px;
    border-radius: 50%;
    background: #d9222e;
    font: bold 10px/13px "Open Sans", sans-serif;
}
.tray {
    display: flex;
    align-items: center;
    gap: 8px;
    margin-left: auto;
    padding-right: 15px;
}
.azure {
    color: #1b8fe3;
}
.lang {
    margin-left: 2px;
    font-size: 12px;
}
.clock {
    display: flex;
    flex-direction: column;
    align-items: center;
    margin-left: 4px;
    line-height: 18px;
}
.notify {
    display: flex;
    position: relative;
    margin-left: 12px;
    padding-right: 7px;
}
.notify em {
    position: absolute;
    left: 7px;
    top: 6px;
    width: 16px;
    height: 16px;
    border: 1px solid #999;
    border-radius: 50%;
    background: #222;
    font: bold 10px/14px "Open Sans", sans-serif;
}
```
